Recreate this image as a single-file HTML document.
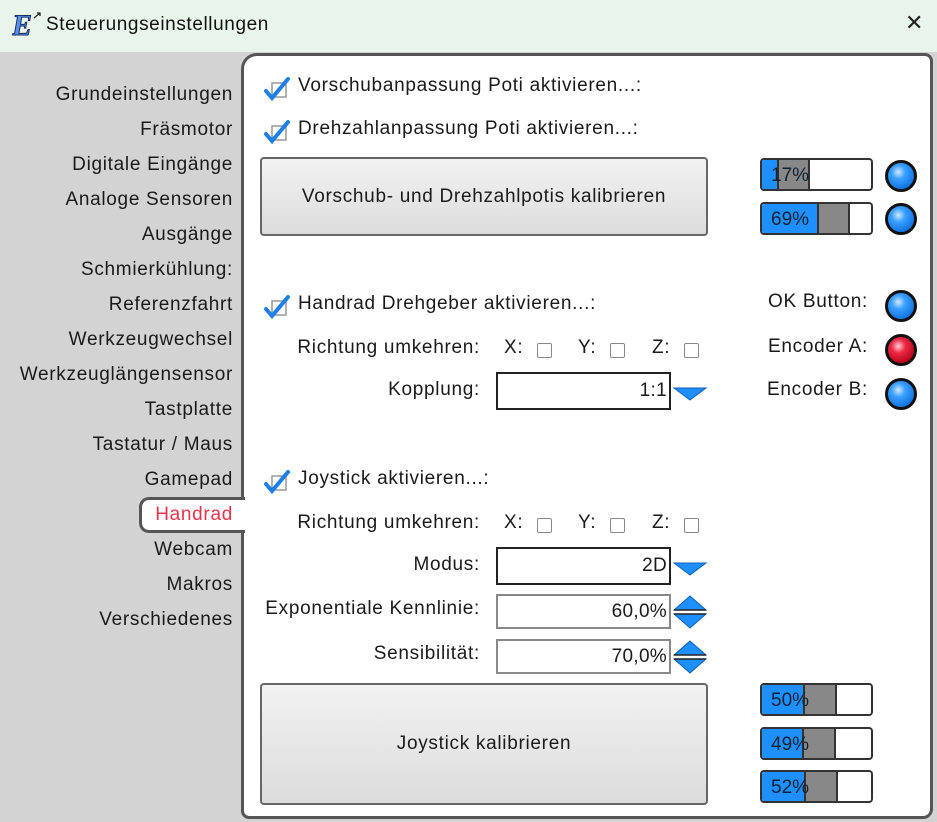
<!DOCTYPE html>
<html><head><meta charset="utf-8"><style>
*{margin:0;padding:0;box-sizing:border-box}
body{width:937px;height:822px;overflow:hidden;background:#d3d3d3;font-family:"Liberation Sans",sans-serif;font-size:19px;letter-spacing:0.7px;color:#1a1a1a;position:relative}
.t{position:absolute;white-space:nowrap;line-height:22px}
.r{text-align:right}
#title{position:absolute;left:0;top:0;width:937px;height:52px;background:#e9f5ea}
#panel{position:absolute;left:241px;top:53px;width:692px;height:766px;background:#fff;border:3px solid #555;border-radius:16px 8px 10px 8px}
.btn{position:absolute;border:2px solid #666;border-radius:4px;background:linear-gradient(#f2f2f2,#dcdcdc);display:flex;align-items:center;justify-content:center;font-size:19px}
.bar{position:absolute;width:113px;height:33px;border:2px solid #333;border-radius:4px;background:#fff;overflow:hidden}
.bar .b{position:absolute;left:0;top:0;bottom:0;background:#1e8fff;border-right:1px solid #333}
.bar .g{position:absolute;top:0;bottom:0;background:#888;border-right:2px solid #333;border-left:1px solid #333}
.bar span{position:absolute;left:9px;top:5px;font-size:19px;letter-spacing:0;color:#123}
.led{position:absolute;width:32px;height:32px;border-radius:50%;border:3px solid #111}
.blue{background:radial-gradient(circle at 40% 35%,#cfe8ff 0,#3aa0ff 30%,#0a6fe0 80%)}
.red{background:radial-gradient(circle at 40% 35%,#ffd0d8 0,#ee2a45 30%,#b00018 80%)}
.inp{position:absolute;border:2px solid #222;background:#fff;text-align:right;padding-right:2px;font-size:19px;letter-spacing:0.3px;line-height:34px}
.inp2{border:2px solid #888}
.cb{position:absolute;width:15px;height:15px;border:1.5px solid #888;border-radius:2px;background:#fff}
.chk{position:absolute}
</style></head><body>
<div id="title">
<svg style="position:absolute;left:12px;top:10px" width="30" height="28" viewBox="0 0 30 28"><text x="0" y="25" font-family="Liberation Serif" font-style="italic" font-weight="bold" font-size="30" fill="#5b8ee6" stroke="#1b2d6b" stroke-width="1">E</text><path d="M22 8 L28 3 M25 3 L28 3 L28 6" stroke="#222" stroke-width="1.3" fill="none"/></svg>
<div class="t" style="left:46px;top:14px;font-size:19px;letter-spacing:0.6px;color:#111">Steuerungseinstellungen</div>
<div class="t" style="left:905px;top:12px;font-size:22px;color:#222">✕</div>
</div>
<div id="panel"></div>

<div class="t r" style="right:704px;top:84px">Grundeinstellungen</div>
<div class="t r" style="right:704px;top:119px">Fräsmotor</div>
<div class="t r" style="right:704px;top:154px">Digitale Eingänge</div>
<div class="t r" style="right:704px;top:189px">Analoge Sensoren</div>
<div class="t r" style="right:704px;top:224px">Ausgänge</div>
<div class="t r" style="right:704px;top:259px">Schmierkühlung:</div>
<div class="t r" style="right:704px;top:294px">Referenzfahrt</div>
<div class="t r" style="right:704px;top:329px">Werkzeugwechsel</div>
<div class="t r" style="right:704px;top:364px">Werkzeuglängensensor</div>
<div class="t r" style="right:704px;top:399px">Tastplatte</div>
<div class="t r" style="right:704px;top:434px">Tastatur / Maus</div>
<div class="t r" style="right:704px;top:469px">Gamepad</div>
<div style="position:absolute;left:139px;top:497px;width:106px;height:36px;background:#fff;border:3px solid #555;border-right:none;border-radius:10px 0 0 10px"></div>
<div class="t r" style="right:704px;top:504px;color:#e8344a">Handrad</div>
<div class="t r" style="right:704px;top:539px">Webcam</div>
<div class="t r" style="right:704px;top:574px">Makros</div>
<div class="t r" style="right:704px;top:609px">Verschiedenes</div>

<svg class="chk" style="left:264px;top:76px" width="30" height="26"><rect x="8" y="7" width="14" height="14" fill="#fff" stroke="#999" stroke-width="1.5"/><path d="M2 15 L8 22 L24 3" stroke="#1e7fe8" stroke-width="4" fill="none" stroke-linecap="round"/></svg>
<div class="t" style="left:298px;top:75px">Vorschubanpassung Poti aktivieren...:</div>
<svg class="chk" style="left:264px;top:119px" width="30" height="26"><rect x="8" y="7" width="14" height="14" fill="#fff" stroke="#999" stroke-width="1.5"/><path d="M2 15 L8 22 L24 3" stroke="#1e7fe8" stroke-width="4" fill="none" stroke-linecap="round"/></svg>
<div class="t" style="left:298px;top:118px">Drehzahlanpassung Poti aktivieren...:</div>

<div class="btn" style="left:260px;top:157px;width:448px;height:79px">Vorschub- und Drehzahlpotis kalibrieren</div>
<div class="bar" style="left:760px;top:158px"><div class="b" style="width:16px"></div><div class="g" style="left:16px;width:32px"></div><span>17%</span></div>
<div class="bar" style="left:760px;top:202px"><div class="b" style="width:56px"></div><div class="g" style="left:56px;width:32px"></div><span>69%</span></div>
<div class="led blue" style="left:885px;top:160px"></div>
<div class="led blue" style="left:885px;top:203px"></div>

<svg class="chk" style="left:264px;top:294px" width="30" height="26"><rect x="8" y="7" width="14" height="14" fill="#fff" stroke="#999" stroke-width="1.5"/><path d="M2 15 L8 22 L24 3" stroke="#1e7fe8" stroke-width="4" fill="none" stroke-linecap="round"/></svg>
<div class="t" style="left:298px;top:293px">Handrad Drehgeber aktivieren...:</div>
<div class="t r" style="right:69px;top:291px">OK Button:</div>
<div class="t r" style="right:69px;top:336px">Encoder A:</div>
<div class="t r" style="right:69px;top:379px">Encoder B:</div>
<div class="led blue" style="left:885px;top:290px"></div>
<div class="led red" style="left:885px;top:334px"></div>
<div class="led blue" style="left:885px;top:378px"></div>

<div class="t r" style="right:457px;top:337px">Richtung umkehren:</div>
<div class="t" style="left:504px;top:337px">X:</div><div class="cb" style="left:537px;top:343px"></div>
<div class="t" style="left:578px;top:337px">Y:</div><div class="cb" style="left:610px;top:343px"></div>
<div class="t" style="left:652px;top:337px">Z:</div><div class="cb" style="left:684px;top:343px"></div>
<div class="t r" style="right:457px;top:379px">Kopplung:</div>
<div class="inp" style="left:496px;top:372px;width:175px;height:38px">1:1</div>
<svg style="position:absolute;left:672px;top:386px" width="36" height="16"><path d="M2 2 L34 2 L18 14Z" fill="#1e8fff" stroke="#0d5fb8" stroke-width="1"/></svg>

<svg class="chk" style="left:264px;top:469px" width="30" height="26"><rect x="8" y="7" width="14" height="14" fill="#fff" stroke="#999" stroke-width="1.5"/><path d="M2 15 L8 22 L24 3" stroke="#1e7fe8" stroke-width="4" fill="none" stroke-linecap="round"/></svg>
<div class="t" style="left:298px;top:468px">Joystick aktivieren...:</div>
<div class="t r" style="right:457px;top:512px">Richtung umkehren:</div>
<div class="t" style="left:504px;top:512px">X:</div><div class="cb" style="left:537px;top:518px"></div>
<div class="t" style="left:578px;top:512px">Y:</div><div class="cb" style="left:610px;top:518px"></div>
<div class="t" style="left:652px;top:512px">Z:</div><div class="cb" style="left:684px;top:518px"></div>

<div class="t r" style="right:457px;top:554px">Modus:</div>
<div class="inp" style="left:496px;top:547px;width:175px;height:38px">2D</div>
<svg style="position:absolute;left:672px;top:561px" width="36" height="16"><path d="M2 2 L34 2 L18 14Z" fill="#1e8fff" stroke="#0d5fb8" stroke-width="1"/></svg>

<div class="t r" style="right:457px;top:598px">Exponentiale Kennlinie:</div>
<div class="inp inp2" style="left:496px;top:594px;width:175px;height:35px;line-height:31px">60,0%</div>
<svg style="position:absolute;left:672px;top:594px" width="36" height="36"><path d="M2 16 L18 2 L34 16Z M2 20 L34 20 L18 34Z" fill="#1e8fff" stroke="#0d5fb8" stroke-width="1"/><path d="M2 16 H34 M2 20 H34" stroke="#222" stroke-width="1.5"/></svg>
<div class="t r" style="right:457px;top:643px">Sensibilität:</div>
<div class="inp inp2" style="left:496px;top:639px;width:175px;height:35px;line-height:31px">70,0%</div>
<svg style="position:absolute;left:672px;top:639px" width="36" height="36"><path d="M2 16 L18 2 L34 16Z M2 20 L34 20 L18 34Z" fill="#1e8fff" stroke="#0d5fb8" stroke-width="1"/><path d="M2 16 H34 M2 20 H34" stroke="#222" stroke-width="1.5"/></svg>

<div class="btn" style="left:260px;top:683px;width:448px;height:122px">Joystick kalibrieren</div>
<div class="bar" style="left:760px;top:683px"><div class="b" style="width:42px"></div><div class="g" style="left:42px;width:33px"></div><span>50%</span></div>
<div class="bar" style="left:760px;top:727px"><div class="b" style="width:41px"></div><div class="g" style="left:41px;width:33px"></div><span>49%</span></div>
<div class="bar" style="left:760px;top:770px"><div class="b" style="width:43px"></div><div class="g" style="left:43px;width:33px"></div><span>52%</span></div>
</body></html>
